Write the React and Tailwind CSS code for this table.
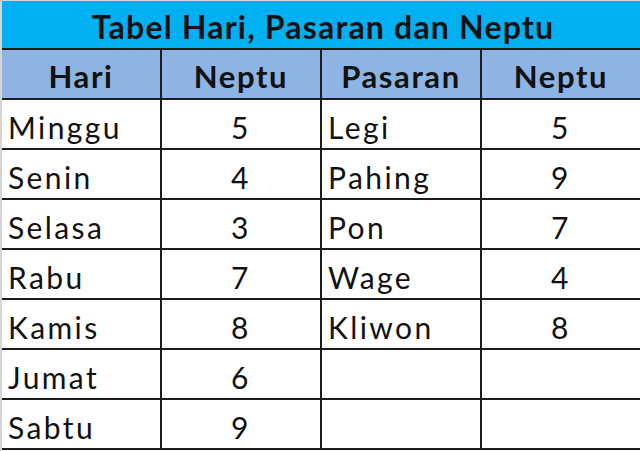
import React from "react";

const rows = [
  ["Minggu", "5", "Legi", "5"],
  ["Senin", "4", "Pahing", "9"],
  ["Selasa", "3", "Pon", "7"],
  ["Rabu", "7", "Wage", "4"],
  ["Kamis", "8", "Kliwon", "8"],
  ["Jumat", "6", "", ""],
  ["Sabtu", "9", "", ""],
];

const font = { fontFamily: "Lato, 'Noto Sans', sans-serif" };

export default function App() {
  return (
    <div
      className="w-[640px] h-[451px] overflow-hidden bg-white border-t border-l-2 border-[#d4d4d4] text-[#111]"
      style={font}
    >
      <div className="h-[49px] bg-[#00b0f0] border-b-2 border-[#1c1c1c] flex items-center justify-center font-bold text-[32px] tracking-[1.2px] leading-none pt-[4px] pl-[4px]">
        Tabel Hari, Pasaran dan Neptu
      </div>
      <div className="grid grid-cols-[160px_160px_160px_1fr] h-[50px] bg-[#8db4e2] border-b-2 border-[#1c1c1c] font-bold text-[31px] tracking-[1.6px] leading-none">
        <div className="border-r-2 border-[#1c1c1c] flex items-center justify-center pt-[4px]">Hari</div>
        <div className="border-r-2 border-[#1c1c1c] flex items-center justify-center pt-[4px]">Neptu</div>
        <div className="border-r-2 border-[#1c1c1c] flex items-center justify-center pt-[4px]">Pasaran</div>
        <div className="flex items-center justify-center pt-[4px]">Neptu</div>
      </div>
      {rows.map((r, i) => (
        <div
          key={i}
          className="grid grid-cols-[160px_160px_160px_1fr] h-[50px] border-b-2 border-[#1c1c1c] text-[30px] tracking-[2.4px] leading-none"
        >
          <div className="border-r-2 border-[#1c1c1c] flex items-center pl-[6px] pt-[6px]">{r[0]}</div>
          <div className="border-r-2 border-[#1c1c1c] flex items-center justify-center pt-[6px]">{r[1]}</div>
          <div className="border-r-2 border-[#1c1c1c] flex items-center pl-[6px] pt-[6px]">{r[2]}</div>
          <div className="flex items-center justify-center pt-[6px]">{r[3]}</div>
        </div>
      ))}
    </div>
  );
}
